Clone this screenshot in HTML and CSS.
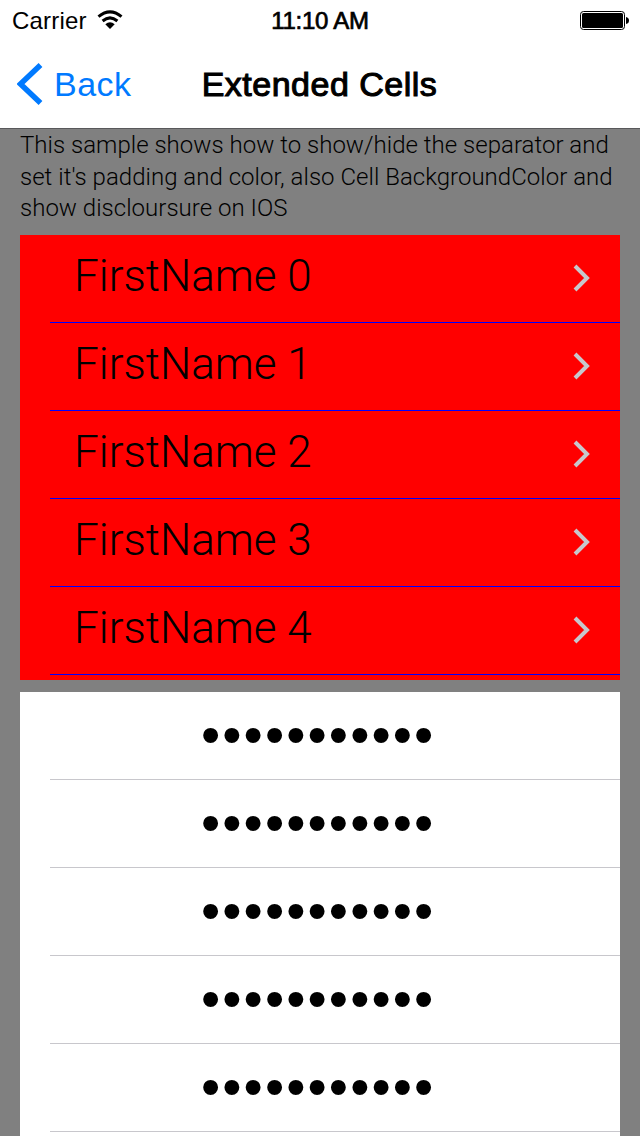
FILE: index.html
```html
<!DOCTYPE html>
<html lang="en">
<head>
<meta charset="utf-8">
<title>Extended Cells</title>
<link rel="stylesheet" href="styles.css">
</head>
<body>
<div class="screen">
  <header class="header">
    <div class="status">
      <div class="status-left">
        <span class="carrier">Carrier</span>
        <svg class="wifi" width="26" height="20" viewBox="0 0 26 20">
          <path d="M1.500 6.700Q13-3 24.500 6.700M5.600 11Q13 4.800 20.400 11" fill="none" stroke="#000" stroke-width="3"/>
          <path d="M8.300 14.200Q13 10.400 17.700 14.200L13 19Z"/>
        </svg>
      </div>
      <span class="time">11:10 AM</span>
      <svg class="battery" width="50" height="20" viewBox="0 0 50 20">
        <rect x=".5" y=".5" width="44" height="18" rx="3" fill="none" stroke="#000"/>
        <rect x="2" y="2" width="41" height="15" rx="1.500"/>
        <path d="M46 6Q49 6.500 49 9.500Q49 12.500 46 13Z"/>
      </svg>
    </div>
    <nav class="nav">
      <a class="back">
        <svg class="back-icon" width="26" height="42" viewBox="0 0 26 42">
          <path d="M23.500 2L3.500 21L23.500 40" fill="none" stroke="#007aff" stroke-width="5.500"/>
        </svg>
        <span class="back-label">Back</span>
      </a>
      <h1 class="title">Extended Cells</h1>
    </nav>
  </header>
  <main class="content">
    <p class="description">This sample shows how to show/hide the separator and<br>set it's padding and color, also Cell BackgroundColor and<br>show discloursure on IOS</p>
    <ul class="list names">
      <li class="cell"><span class="name">FirstName 0</span><svg class="chevron" width="18" height="28" viewBox="0 0 18 28"><path d="M2 2L14 14L2 26" /></svg></li>
      <li class="cell"><span class="name">FirstName 1</span><svg class="chevron" width="18" height="28" viewBox="0 0 18 28"><path d="M2 2L14 14L2 26" /></svg></li>
      <li class="cell"><span class="name">FirstName 2</span><svg class="chevron" width="18" height="28" viewBox="0 0 18 28"><path d="M2 2L14 14L2 26" /></svg></li>
      <li class="cell"><span class="name">FirstName 3</span><svg class="chevron" width="18" height="28" viewBox="0 0 18 28"><path d="M2 2L14 14L2 26" /></svg></li>
      <li class="cell"><span class="name">FirstName 4</span><svg class="chevron" width="18" height="28" viewBox="0 0 18 28"><path d="M2 2L14 14L2 26" /></svg></li>
    </ul>
    <ul class="list secrets">
      <li class="cell"><span class="dots">•••••••••••</span></li>
      <li class="cell"><span class="dots">•••••••••••</span></li>
      <li class="cell"><span class="dots">•••••••••••</span></li>
      <li class="cell"><span class="dots">•••••••••••</span></li>
      <li class="cell"><span class="dots">•••••••••••</span></li>
    </ul>
  </main>
</div>
</body>
</html>
```
FILE: styles.css
```css
* { box-sizing: border-box; margin: 0; padding: 0; }
body { background: #808080; color: #000; font-family: "Liberation Sans", Arial, sans-serif; }
.screen { width: 640px; height: 1136px; overflow: hidden; display: flex; flex-direction: column; }
.header { height: 129px; flex: none; background: #fff; border-bottom: 1px solid #58585a; }
.status { height: 40px; padding: 0 10px 0 12px; display: grid; grid-template-columns: 1fr auto 1fr; align-items: center; }
.status-left { display: flex; align-items: center; gap: 10px; }
.carrier { font-size: 24px; line-height: 28px; letter-spacing: .2px; padding-top: 2px; }
.time { font-size: 24px; line-height: 28px; letter-spacing: -.25px; padding: 2px 2px 0 0; -webkit-text-stroke: .7px #000; }
.battery { justify-self: end; margin-top: 2px; }
.nav { height: 88px; padding: 0 18px 0 17px; display: grid; grid-template-columns: 1fr auto 1fr; align-items: center; }
.back { display: flex; align-items: center; gap: 11px; color: #007aff; }
.back-label { font-size: 34px; line-height: 40px; letter-spacing: .5px; }
.title { font-size: 34px; line-height: 40px; font-weight: 400; letter-spacing: .5px; -webkit-text-stroke: 1.1px #000; }
.content { padding: 0 20px; display: flex; flex-direction: column; }
.description { height: 106px; padding-top: 1px; font: 300 24px/31.5px Roboto, sans-serif; letter-spacing: .02px; white-space: nowrap; }
.list { list-style: none; overflow: hidden; padding-left: 30px; }
.cell { height: 88px; display: flex; align-items: center; border-bottom: 1px solid #c8c7cc; }
.names { height: 445px; margin-bottom: 12px; background: #f00; }
.names .cell { padding: 0 29px 0 24px; justify-content: space-between; border-color: #00f; }
.name { font: 300 44px/52px Roboto, sans-serif; padding-bottom: 5px; }
.chevron { fill: none; stroke: #c7c7cc; stroke-width: 4; margin-bottom: 2px; }
.secrets { height: 444px; background: #fff; }
.secrets .cell { padding-left: 151px; }
.dots { font-size: 55px; line-height: 60px; letter-spacing: 2.05px; padding-bottom: 2px; }
```
